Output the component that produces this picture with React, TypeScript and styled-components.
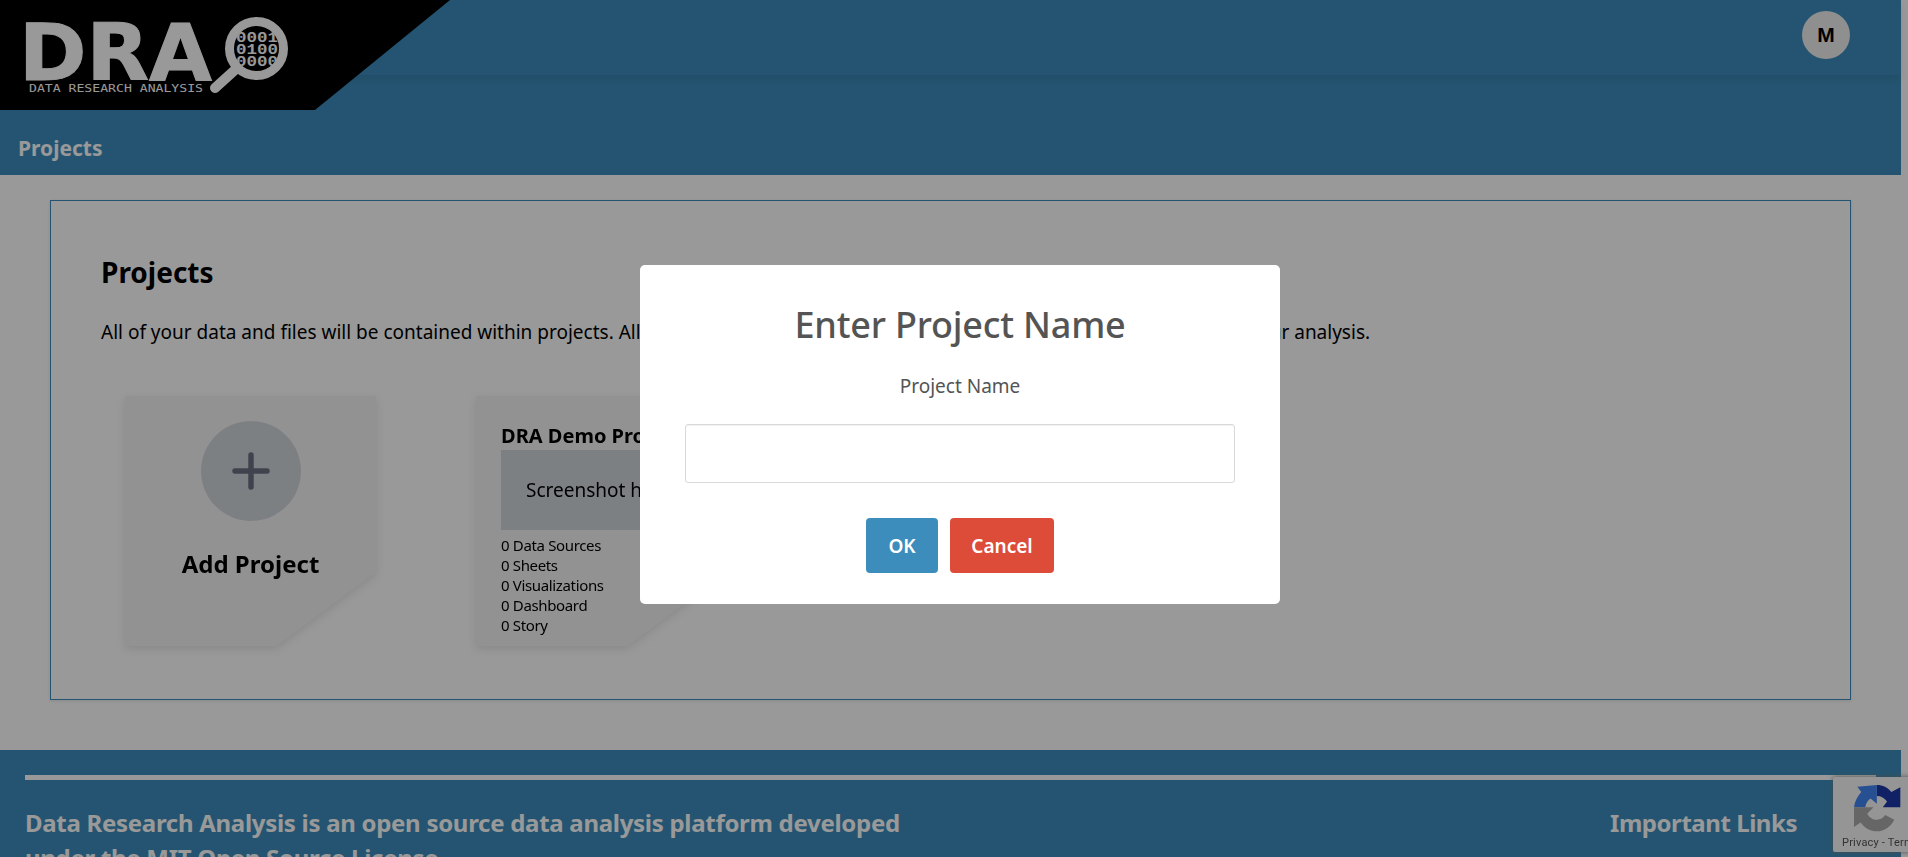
import styled, { createGlobalStyle } from "styled-components";

const GlobalStyle = createGlobalStyle`
  html, body {
    margin: 0;
    height: 100%;
    overflow: hidden;
    background: #fff;
  }
  * {
    box-sizing: border-box;
  }
  body {
    font-family: "Noto Sans", "Open Sans", sans-serif;
    color: #000;
  }
`;

const STATS = ["0 Data Sources", "0 Sheets", "0 Visualizations", "0 Dashboard", "0 Story"];
const LENS_ROWS = ["0001", "0100", "0000"];

const Logo = () => (
  <svg width="300" height="110" viewBox="0 0 300 110">
    <defs>
      <clipPath id="lens">
        <circle cx="256.5" cy="48.5" r="23" />
      </clipPath>
    </defs>
    <text
      x="19"
      y="80"
      fontFamily="'DejaVu Sans', sans-serif"
      fontWeight="700"
      fontSize="78"
      fill="#fff"
      stroke="#fff"
      strokeWidth="1"
      textLength="193"
      lengthAdjust="spacingAndGlyphs"
    >
      DRA
    </text>
    <text
      x="29"
      y="92"
      fontFamily="'DejaVu Sans Mono', monospace"
      fontSize="10"
      fill="#fff"
      textLength="174"
      lengthAdjust="spacingAndGlyphs"
    >
      DATA RESEARCH ANALYSIS
    </text>
    <circle cx="256.5" cy="48.5" r="27" fill="none" stroke="#fff" strokeWidth="9" />
    <path d="M236 69 L215 88" stroke="#fff" strokeWidth="10" strokeLinecap="round" />
    <g clipPath="url(#lens)">
      {LENS_ROWS.map((row, i) => (
        <text
          key={row + i}
          x="236"
          y={41.5 + i * 12}
          fontFamily="'Liberation Mono', monospace"
          fontWeight="700"
          fontSize="15"
          fill="#fff"
          textLength="42"
          lengthAdjust="spacingAndGlyphs"
        >
          {row}
        </text>
      ))}
    </g>
  </svg>
);

const RecaptchaIcon = () => (
  <svg width="47" height="47" viewBox="78 45 142 142">
    <path
      d="M147 45 C165 45 180 53 191 66 L218 52 L218 112 L165 112 L178 95 C170 84 160 78 147 78 Z"
      fill="#1c3aa9"
    />
    <path
      d="M78 112 C80 95 88 80 100 66 L88 50 L147 45 L147 102 L128 86 C120 92 114 100 112 112 Z"
      fill="#4285f4"
    />
    <path
      d="M78 112 L137 112 L118 132 C125 145 135 150 147 150 C158 150 166 145 172 136 L200 150 C188 172 170 185 147 185 C127 185 110 175 98 158 L78 172 Z"
      fill="#ababab"
    />
  </svg>
);

const AddProjectCard = () => (
  <CardShell>
    <AddFace>
      <AddCircle>
        <svg width="38" height="38" viewBox="0 0 38 38">
          <path d="M19 3 V35 M3 19 H35" stroke="#6b7080" strokeWidth="5.5" strokeLinecap="round" />
        </svg>
      </AddCircle>
      <AddLabel>Add Project</AddLabel>
    </AddFace>
  </CardShell>
);

const ProjectCard = (props: { name: string; stats: string[] }) => (
  <CardShell>
    <ProjectFace>
      <ProjectName>{props.name}</ProjectName>
      <Screenshot>Screenshot here</Screenshot>
      <StatList>
        {props.stats.map((s) => (
          <div key={s}>{s}</div>
        ))}
      </StatList>
    </ProjectFace>
  </CardShell>
);

export default function App() {
  return (
    <>
      <GlobalStyle />
      <Page>
        <Header>
          <TopBar>
            <Avatar>M</Avatar>
          </TopBar>
          <SubBar>Projects</SubBar>
          <Brand>
            <Logo />
          </Brand>
        </Header>
        <Main>
          <Panel>
            <PanelTitle>Projects</PanelTitle>
            <PanelText>
              All of your data and files will be contained within projects. All of your sheets, visualizations
              and dashboards are in one project for your analysis.
            </PanelText>
            <CardRow>
              <AddProjectCard />
              <ProjectCard name="DRA Demo Project" stats={STATS} />
            </CardRow>
          </Panel>
        </Main>
        <Footer>
          <FooterRule />
          <FooterRow>
            <FooterAbout>
              Data Research Analysis is an open source data analysis platform developed under the MIT Open Source
              License.
            </FooterAbout>
            <FooterLinks>Important Links</FooterLinks>
          </FooterRow>
        </Footer>
      </Page>
      <Badge>
        <BadgeLogo>
          <RecaptchaIcon />
          <BadgeText>Privacy - Terms</BadgeText>
        </BadgeLogo>
      </Badge>
      <Overlay>
        <Modal>
          <ModalTitle>Enter Project Name</ModalTitle>
          <FieldLabel htmlFor="project-name">Project Name</FieldLabel>
          <FieldInput id="project-name" type="text" />
          <ModalActions>
            <ActionButton $bg="#3c8dbc" $width={72}>
              OK
            </ActionButton>
            <ActionButton $bg="#dd4b39" $width={104}>
              Cancel
            </ActionButton>
          </ModalActions>
        </Modal>
      </Overlay>
    </>
  );
}

const Page = styled.div`
  width: 1901px;
`;

const Header = styled.header`
  position: relative;
  background: #3c8dbc;
`;

const TopBar = styled.div`
  position: relative;
  height: 75px;
  display: flex;
  justify-content: flex-end;
  padding: 11px 51px 0 0;
  background: #3c8dbc;
  box-shadow: 0 4px 8px rgba(0, 0, 0, 0.08);
`;

const Avatar = styled.div`
  width: 48px;
  height: 48px;
  border-radius: 50%;
  display: flex;
  align-items: center;
  justify-content: center;
  background: #efefef;
  font-family: "Liberation Sans", Arial, sans-serif;
  font-size: 21px;
  font-weight: 700;
`;

const SubBar = styled.div`
  height: 100px;
  padding: 58px 0 0 18px;
  font-size: 21px;
  line-height: 30px;
  font-weight: 700;
  color: #fff;
`;

const Brand = styled.div`
  position: absolute;
  top: 0;
  left: 0;
  width: 450px;
  height: 110px;
  background: #000;
  clip-path: polygon(0 0, 100% 0, 315px 100%, 0 100%);
`;

const Main = styled.main`
  padding: 25px 50px 50px;
`;

const Panel = styled.section`
  height: 500px;
  padding: 49px 50px 0;
  border: 1px solid #3c8dbc;
  box-shadow: 0 1px 3px rgba(0, 0, 0, 0.1);
`;

const PanelTitle = styled.h2`
  margin: 0;
  font-size: 28px;
  line-height: 44px;
  font-weight: 700;
`;

const PanelText = styled.p`
  margin: 23px 0 0;
  font-size: 19px;
  line-height: 30px;
  white-space: nowrap;
`;

const CardRow = styled.div`
  display: flex;
  gap: 100px;
  margin-top: 49px;
  padding-left: 24px;
`;

const CardShell = styled.div`
  filter: drop-shadow(0 3px 4px rgba(0, 0, 0, 0.1));
`;

const CardFace = styled.div`
  width: 251px;
  height: 250px;
  background: #f3f4f6;
  clip-path: polygon(0 0, 100% 0, 100% 176px, 151px 100%, 0 100%);
`;

const AddFace = styled(CardFace)`
  display: flex;
  flex-direction: column;
  align-items: center;
  padding-top: 25px;
`;

const AddCircle = styled.div`
  width: 100px;
  height: 100px;
  border-radius: 50%;
  display: flex;
  align-items: center;
  justify-content: center;
  background: #d1d5db;
`;

const AddLabel = styled.div`
  margin-top: 25px;
  font-size: 24px;
  line-height: 36px;
  font-weight: 700;
`;

const ProjectFace = styled(CardFace)`
  padding: 26px 25px 0 25px;
`;

const ProjectName = styled.div`
  font-size: 20px;
  line-height: 28px;
  font-weight: 700;
  white-space: nowrap;
`;

const Screenshot = styled.div`
  height: 80px;
  display: flex;
  align-items: center;
  padding-left: 25px;
  background: #d1d5db;
  font-size: 19px;
  white-space: nowrap;
`;

const StatList = styled.div`
  margin-top: 5px;
  font-size: 15px;
  letter-spacing: -0.35px;
  line-height: 20px;
`;

const Footer = styled.footer`
  height: 300px;
  padding: 25px 25px 0;
  background: #3c8dbc;
  color: #fff;
`;

const FooterRule = styled.div`
  height: 5px;
  background: #fff;
`;

const FooterRow = styled.div`
  display: flex;
  justify-content: space-between;
  margin-top: 25px;
  font-size: 24px;
  line-height: 35px;
  font-weight: 700;
`;

const FooterAbout = styled.div`
  width: 900px;
  letter-spacing: -0.29px;
`;

const FooterLinks = styled.div`
  width: 266px;
  letter-spacing: -0.45px;
`;

const Badge = styled.div`
  position: fixed;
  right: -181px;
  bottom: 5px;
  width: 256px;
  height: 75px;
  border-radius: 2px;
  background: #f9f9f9;
  box-shadow: 0 0 5px rgba(128, 128, 128, 0.9);
  overflow: hidden;
`;

const BadgeLogo = styled.div`
  display: flex;
  flex-direction: column;
  align-items: flex-start;
  padding: 8px 0 0 9px;

  svg {
    margin-left: 12px;
  }
`;

const BadgeText = styled.div`
  margin-top: 5px;
  font-family: Roboto, "Liberation Sans", sans-serif;
  font-size: 11px;
  letter-spacing: 0.2px;
  line-height: 12px;
  color: #555;
  white-space: nowrap;
`;

const Overlay = styled.div`
  position: fixed;
  inset: 0;
  display: flex;
  justify-content: center;
  align-items: flex-start;
  padding: 265px 0 0 12px;
  background: rgba(0, 0, 0, 0.4);
`;

const Modal = styled.div`
  width: 640px;
  height: 339px;
  display: flex;
  flex-direction: column;
  align-items: center;
  padding-top: 34px;
  border-radius: 5px;
  background: #fff;
`;

const ModalTitle = styled.h2`
  margin: 0;
  font-size: 36px;
  letter-spacing: -0.2px;
  line-height: 52px;
  font-weight: 500;
  color: #545454;
`;

const FieldLabel = styled.label`
  margin-top: 22px;
  font-size: 19px;
  line-height: 26px;
  color: #545454;
`;

const FieldInput = styled.input`
  width: 550px;
  height: 59px;
  margin-top: 25px;
  border: 1px solid #d9d9d9;
  border-radius: 3px;
  outline: none;
  box-shadow: inset 0 1px 1px rgba(0, 0, 0, 0.06);
`;

const ModalActions = styled.div`
  display: flex;
  gap: 12px;
  margin-top: 35px;
`;

const ActionButton = styled.button<{ $bg: string; $width: number }>`
  width: ${(p) => p.$width}px;
  height: 55px;
  padding: 0;
  border: 0;
  border-radius: 4px;
  background: ${(p) => p.$bg};
  color: #fff;
  font-family: inherit;
  font-size: 19px;
  font-weight: 600;
`;
